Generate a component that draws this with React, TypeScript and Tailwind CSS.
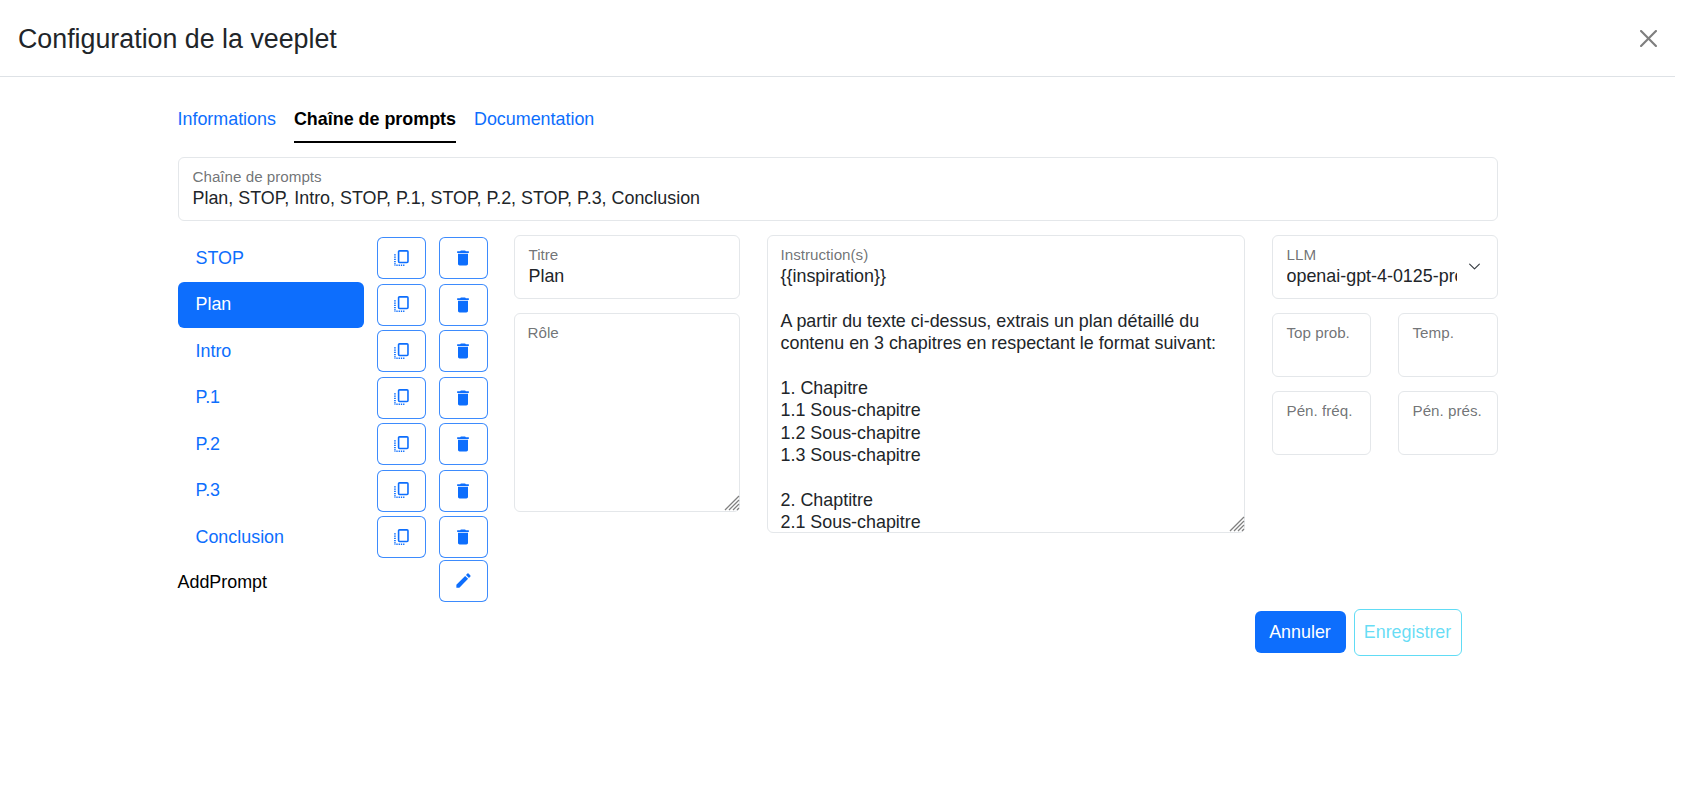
import { MdDelete, MdEdit } from "react-icons/md";

const PROMPTS = ["STOP", "Plan", "Intro", "P.1", "P.2", "P.3", "Conclusion"];

const INSTRUCTIONS = `{{inspiration}}

A partir du texte ci-dessus, extrais un plan détaillé du contenu en 3 chapitres en respectant le format suivant:

1. Chapitre
1.1 Sous-chapitre
1.2 Sous-chapitre
1.3 Sous-chapitre

2. Chaptitre
2.1 Sous-chapitre`;

const labelClass = "absolute text-[15.2px] leading-[20px] text-[#212529]/65 pointer-events-none";
const fieldClass = "relative rounded-md border border-[#e4e7ea] bg-white";

function IconButton({ children }: { children: React.ReactNode }) {
  return (
    <button className="w-[49px] h-[42px] shrink-0 flex items-center justify-center rounded-md border border-[#0d6efd]/80 text-[#0d6efd] bg-white">
      {children}
    </button>
  );
}

function DuplicateIcon() {
  return (
    <svg viewBox="0 0 16 18" className="w-[15px] h-[17px]" fill="none" stroke="currentColor">
      <rect x="4.9" y="0.9" width="10" height="12.4" rx="1" strokeWidth="1.7" />
      <path d="M1 4.5V17" strokeWidth="1.8" strokeDasharray="1.4 1" />
      <path d="M2.5 16.2H12" strokeWidth="1.6" strokeDasharray="1.4 1" />
    </svg>
  );
}

function Field({ label, value, className }: { label: string; value?: string; className: string }) {
  return (
    <div className={`${fieldClass} ${className}`}>
      <span className={`${labelClass} left-[14px] top-[9px]`}>{label}</span>
      {value && (
        <div className="absolute left-[14px] top-[28px] text-[17.9px] leading-6 text-[#212529]">{value}</div>
      )}
    </div>
  );
}

function TextField({ label, value, className }: { label: string; value: string; className: string }) {
  return (
    <div className={`relative flex ${className}`}>
      <textarea
        readOnly
        value={value}
        className="w-full h-full resize-none rounded-md border border-[#e4e7ea] bg-white px-[13px] pt-[29px] text-[17.9px] leading-[22.4px] text-[#212529] overflow-hidden outline-none"
      />
      <span className={`${labelClass} left-[14px] top-[10px]`}>{label}</span>
      <svg viewBox="0 0 16 16" className="absolute right-0 bottom-[1px] w-4 h-4" stroke="#808080" strokeWidth="1.3">
        <path d="M15 1 1 15M15 5 5 15M15 9 9 15M15 13 13 15" />
      </svg>
    </div>
  );
}

export default function App() {
  return (
    <div className="w-[1675px] min-h-[799px] bg-white font-['Liberation_Sans',Arial,sans-serif] text-[#212529]">
      <header className="h-[77px] border-b border-[#dee2e6] flex items-center justify-between px-[18px]">
        <h1 className="text-[26.8px] leading-[36px] mt-[1px]">Configuration de la veeplet</h1>
        <button className="w-[17px] h-[17px] opacity-50" aria-label="Fermer">
          <svg viewBox="0 0 16 16" fill="#000" className="w-full h-full">
            <path d="M.293.293a1 1 0 0 1 1.414 0L8 6.586 14.293.293a1 1 0 1 1 1.414 1.414L9.414 8l6.293 6.293a1 1 0 0 1-1.414 1.414L8 9.414l-6.293 6.293a1 1 0 0 1-1.414-1.414L6.586 8 .293 1.707a1 1 0 0 1 0-1.414z" />
          </svg>
        </button>
      </header>

      <main className="w-[1320px] mx-auto">
        <nav className="flex gap-[18px] pt-[30px] text-[17.9px] leading-6">
          <a className="text-[#0d6efd] pb-[10px]">Informations</a>
          <a className="font-bold text-black border-b-2 border-black pb-[10px]">Chaîne de prompts</a>
          <a className="text-[#0d6efd] pb-[10px]">Documentation</a>
        </nav>

        <div className={`${fieldClass} h-[64px] mt-[14px]`}>
          <span className={`${labelClass} left-[14px] top-[9px]`}>Chaîne de prompts</span>
          <div className="absolute left-[14px] top-[28px] text-[17.9px] leading-6">
            Plan, STOP, Intro, STOP, P.1, STOP, P.2, STOP, P.3, Conclusion
          </div>
        </div>

        <div className="flex mt-[14px]">
          <div className="w-[310px] shrink-0">
            {PROMPTS.map((name) => (
              <div key={name} className="flex items-center h-[46.5px]">
                <div
                  className={`w-[186px] h-full flex items-center pl-[18px] rounded-md text-[17.9px] ${
                    name === "Plan" ? "bg-[#0d6efd] text-white" : "text-[#0d6efd]"
                  }`}
                >
                  {name}
                </div>
                <div className="flex gap-[13px] ml-[13px]">
                  <IconButton>
                    <DuplicateIcon />
                  </IconButton>
                  <IconButton>
                    <MdDelete size={20} />
                  </IconButton>
                </div>
              </div>
            ))}
            <div className="flex items-center justify-between h-[42px] -mt-[1px]">
              <span className="text-[17.9px] text-black mt-[3px]">AddPrompt</span>
              <IconButton>
                <MdEdit size={19} />
              </IconButton>
            </div>
          </div>

          <div className="w-[26px] shrink-0" />

          <div className="w-[226px] shrink-0 flex flex-col gap-[14px]">
            <Field label="Titre" value="Plan" className="h-[64px]" />
            <TextField label="Rôle" value="" className="h-[199px]" />
          </div>

          <TextField label="Instruction(s)" value={INSTRUCTIONS} className="w-[478px] h-[298px] ml-[27px]" />

          <div className="w-[226px] ml-[27px] flex flex-col gap-[14px]">
            <div className={`${fieldClass} h-[64px]`}>
              <span className={`${labelClass} left-[14px] top-[9px]`}>LLM</span>
              <div className="absolute left-[14px] top-[28px] w-[170px] overflow-hidden whitespace-nowrap text-[17.9px] leading-6">
                openai-gpt-4-0125-preview
              </div>
              <svg viewBox="0 0 16 16" className="absolute right-[16px] top-[24px] w-[13px] h-[13px]" fill="none">
                <path d="m2 5 6 6 6-6" stroke="#343a40" strokeWidth="1.4" strokeLinecap="round" strokeLinejoin="round" />
              </svg>
            </div>
            <div className="grid grid-cols-[99px_100px] justify-between gap-y-[14px]">
              <Field label="Top prob." className="h-[64px]" />
              <Field label="Temp." className="h-[64px]" />
              <Field label="Pén. fréq." className="h-[64px]" />
              <Field label="Pén. prés." className="h-[64px]" />
            </div>
          </div>
        </div>

        <div className="flex justify-end items-center gap-2 pr-9 mt-[7px]">
          <button className="h-[42px] w-[91px] rounded-md bg-[#0d6efd] text-white text-[17.9px]">Annuler</button>
          <button className="h-[47px] w-[108px] rounded-md border border-[#0dcaf0]/65 text-[#0dcaf0]/65 text-[17.9px]">
            Enregistrer
          </button>
        </div>
      </main>
    </div>
  );
}
